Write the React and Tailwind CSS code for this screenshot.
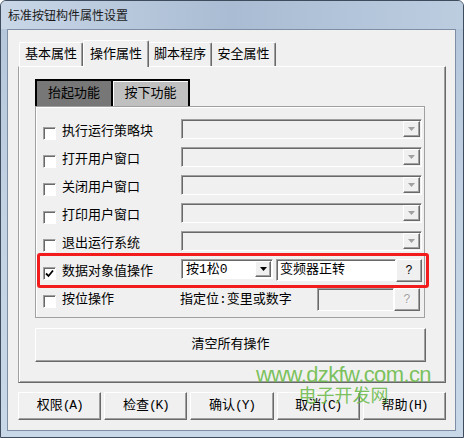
import React from "react";

const raised =
  "border border-t-white border-l-white border-r-[#696969] border-b-[#696969] shadow-[inset_-1px_-1px_0_#a0a0a0]";
const sunken =
  "border border-t-[#a0a0a0] border-l-[#a0a0a0] border-r-white border-b-white shadow-[inset_1px_1px_0_#696969]";

function Tri({ color }) {
  return (
    <svg width="7" height="4" viewBox="0 0 7 4">
      <path d="M0 0h7L3.5 4z" fill={color} />
    </svg>
  );
}

function Check({ checked }) {
  return (
    <div className={`w-[13px] h-[13px] mt-[8px] ml-[7px] bg-white ${sunken} flex items-center justify-center`}>
      {checked && (
        <svg width="9" height="9" viewBox="0 0 9 9">
          <path d="M1 4.5l2.5 2.5L8 1.5" stroke="#000" strokeWidth="1.8" fill="none" />
        </svg>
      )}
    </div>
  );
}

function Dropdown() {
  return (
    <div className={`w-[241px] h-[20px] ${sunken} bg-[#f0f0f0] flex justify-end p-[1px]`}>
      <div className={`w-[17px] ${raised} bg-[#f0f0f0] flex items-center justify-center`}>
        <Tri color="#a0a0a0" />
      </div>
    </div>
  );
}

const rows = ["执行运行策略块", "打开用户窗口", "关闭用户窗口", "打印用户窗口", "退出运行系统"];
const buttons = [
  ["权限", "(A)"],
  ["检查", "(K)"],
  ["确认", "(Y)"],
  ["取消", "(C)"],
  ["帮助", "(H)"],
];

export default function App() {
  return (
    <div className="relative w-[464px] h-[438px] bg-white font-['Liberation_Mono','Noto_Sans_CJK_SC',monospace] text-[13px] text-black overflow-hidden">
      <div className="w-[464px] h-[438px] rounded-t-[6px] border border-[#3e4c5e] bg-linear-to-b from-[#b3c5da] via-[#c4d3e4] to-[#c9d8e9] flex flex-col">
        {/* title bar */}
        <div className="h-[28px] shrink-0 flex items-center pl-[7px] bg-linear-to-r from-[#c9d7e7] via-[#a9bcd3] to-[#bccde0] rounded-t-[5px]">
          <span className="font-['Noto_Sans_CJK_SC',sans-serif] text-[12px] leading-[12px] text-[#1a1a1a]">
            标准按钮构件属性设置
          </span>
        </div>

        <div className="flex-1 flex px-[6px] pb-[6px]">
          {/* client area */}
          <div className="w-[449px] h-[402px] border border-[#7d8ea5] bg-[#f0f0f0] flex flex-col">
            {/* top tabs */}
            <div className="flex items-end h-[26px] mt-[10px] ml-[11px]">
              <div className="w-[64px] h-[24px] border-t border-l border-t-white border-l-white border-r border-r-[#696969] shadow-[inset_-1px_0_0_#a0a0a0] rounded-t-[2px] flex items-center justify-center">
                基本属性
              </div>
              <div className="relative z-10 w-[66px] h-[27px] -mb-px bg-[#f0f0f0] border-t border-l border-t-white border-l-white border-r border-r-[#696969] shadow-[inset_-1px_0_0_#a0a0a0] rounded-t-[2px] flex items-start pt-[4px] justify-center">
                操作属性
              </div>
              <div className="w-[63px] h-[24px] border-t border-t-white border-r border-r-[#696969] shadow-[inset_-1px_0_0_#a0a0a0] rounded-t-[2px] flex items-center justify-center">
                脚本程序
              </div>
              <div className="w-[64px] h-[24px] border-t border-t-white border-r border-r-[#696969] shadow-[inset_-1px_0_0_#a0a0a0] rounded-t-[2px] flex items-center justify-center">
                安全属性
              </div>
            </div>

            {/* tab panel */}
            <div className="w-[428px] h-[317px] ml-[10px] border border-t-white border-l-[#a0a0a0] border-r-[#696969] border-b-[#696969] shadow-[inset_1px_0_0_white,inset_-1px_-1px_0_#a0a0a0] pl-[16px] pt-[12px] flex flex-col">
              {/* inner tabs */}
              <div className="flex h-[27px]">
                <div className="w-[78px] h-[27px] bg-[#777777] border-2 border-b-0 border-black flex items-center justify-center">
                  抬起功能
                </div>
                <div className="w-[77px] h-[27px] bg-[#c0c0c0] border-t-2 border-r-2 border-black shadow-[inset_1px_1px_0_white] flex items-center justify-center">
                  按下功能
                </div>
              </div>

              {/* inner panel */}
              <div className="relative w-[390px] h-[212px] border border-[#a0a0a0] shadow-[inset_1px_1px_0_white] pt-[12px] flex flex-col">
                {rows.map((r) => (
                  <div key={r} className="flex h-[28px] items-start">
                    <Check />
                    <span className="ml-[6px] w-[119px] mt-[3px] leading-[20px]">{r}</span>
                    <Dropdown />
                  </div>
                ))}

                <div className="flex h-[28px] items-start">
                  <Check checked />
                  <span className="ml-[6px] w-[119px] mt-[3px] leading-[20px]">数据对象值操作</span>
                  <div className={`w-[92px] h-[20px] ${sunken} bg-white flex items-stretch p-[1px]`}>
                    <span className="flex-1 pl-[3px] leading-[17px]">按1松0</span>
                    <div className={`w-[16px] ${raised} bg-[#f0f0f0] flex items-center justify-center`}>
                      <Tri color="#000" />
                    </div>
                  </div>
                  <div className={`ml-[3px] w-[120px] h-[22px] ${sunken} bg-white pl-[3px] leading-[19px]`}>
                    变频器正转
                  </div>
                  <div className={`w-[26px] h-[23px] ${raised} bg-[#f0f0f0] flex items-center justify-center text-[12px]`}>
                    ?
                  </div>
                </div>

                <div className="flex h-[28px] items-start">
                  <Check />
                  <span className="ml-[6px] w-[118px] mt-[3px] leading-[20px]">按位操作</span>
                  <span className="w-[137px] mt-[3px] leading-[20px]">指定位:变里或数字</span>
                  <div className={`mt-[1px] w-[77px] h-[23px] ${sunken} bg-[#f0f0f0]`} />
                  <div className={`mt-[1px] w-[26px] h-[23px] ${raised} bg-[#f0f0f0] flex items-center justify-center text-[12px] text-[#a0a0a0] [text-shadow:1px_1px_0_white]`}>
                    ?
                  </div>
                </div>

                {/* red highlight */}
                <div className="absolute left-[1px] top-[146px] w-[392px] h-[35px] border-[3px] border-[#f21c1c] rounded-[3px] pointer-events-none" />
              </div>

              <div className={`mt-[10px] w-[391px] h-[34px] ${raised} bg-[#f0f0f0] flex items-center justify-center`}>
                清空所有操作
              </div>
            </div>

            {/* bottom buttons */}
            <div className="flex gap-[3px] w-[428px] ml-[10px] mt-[9px]">
              {buttons.map(([b, k]) => (
                <div key={b} className={`flex-1 h-[28px] ${raised} bg-[#f0f0f0] flex items-center justify-center`}>
                  {b}
                  <span className="tracking-[-1.2px]">{k}</span>
                </div>
              ))}
            </div>
          </div>
        </div>
      </div>

      {/* watermark */}
      <div className="absolute left-[256px] top-[364px] flex flex-col items-center pointer-events-none">
        <span className="font-['Liberation_Sans',sans-serif] text-[22px] leading-[21px] tracking-[-0.6px] text-[#6cbb4a]/90">
          www.dzkfw.com.cn
        </span>
        <span className="font-['Noto_Sans_CJK_SC',sans-serif] text-[18px] leading-[18px] text-[#6cbb4a]/90">
          电子开发网
        </span>
      </div>
    </div>
  );
}
